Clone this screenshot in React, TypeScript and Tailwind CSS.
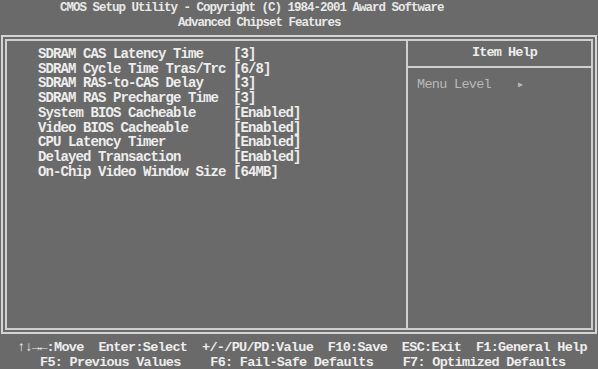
const items = [
    { label: "SDRAM CAS Latency Time", value: "[3]" },
    { label: "SDRAM Cycle Time Tras/Trc", value: "[6/8]" },
    { label: "SDRAM RAS-to-CAS Delay", value: "[3]" },
    { label: "SDRAM RAS Precharge Time", value: "[3]" },
    { label: "System BIOS Cacheable", value: "[Enabled]" },
    { label: "Video BIOS Cacheable", value: "[Enabled]" },
    { label: "CPU Latency Timer", value: "[Enabled]" },
    { label: "Delayed Transaction", value: "[Enabled]" },
    { label: "On-Chip Video Window Size", value: "[64MB]" },
];

export default function App() {
    return (
        <div className="w-[598px] h-[369px] overflow-hidden bg-[#6a6a6a] text-[#ededed] font-bold font-['Liberation_Mono','DejaVu_Sans_Mono',monospace]">
            {/* Title */}
            <div className="pt-[1px] text-[12.5px] leading-[15px] tracking-[-1px] text-[#e8e8e8] whitespace-pre">
                <div className="pl-[60px]">CMOS Setup Utility - Copyright (C) 1984-2001 Award Software</div>
                <div className="pl-[178px]">Advanced Chipset Features</div>
            </div>

            {/* Main frame */}
            <div className="mt-[4px] ml-[1px] w-[596px] h-[299px] border-2 border-[#d4d4d4] p-[2px]">
                <div className="h-full border-2 border-[#cfcfcf] flex">
                    <div className="w-[399px] pt-[6px] pl-[31px] text-[14px] leading-[14.7px] tracking-[-0.9px] whitespace-pre">
                        {items.map((item) => (
                            <div key={item.label} className="flex">
                                <span className="w-[195px] shrink-0">{item.label}</span>
                                <span>{item.value}</span>
                            </div>
                        ))}
                    </div>
                    <div className="flex-1 border-l-2 border-[#cfcfcf] flex flex-col">
                        <div className="h-[27px] border-b-2 border-[#cfcfcf] flex items-center justify-center pl-[10px] text-[13.5px] tracking-[-0.9px]">
                            Item Help
                        </div>
                        <div className="pt-[10px] pl-[9px] text-[13.5px] leading-[14px] tracking-[-0.7px] text-[#b9b9b9] font-normal whitespace-pre flex items-center">
                            <span>Menu Level</span>
                            <span className="ml-[27px] text-[8px]">▶</span>
                        </div>
                    </div>
                </div>
            </div>

            {/* Footer */}
            <div className="mt-[7px] text-[13.5px] leading-[14.7px] tracking-[-0.7px] whitespace-pre">
                <div className="pl-[17px]">↑↓→←:Move  Enter:Select  +/-/PU/PD:Value  F10:Save  ESC:Exit  F1:General Help</div>
                <div className="pl-[40px]">F5: Previous Values    F6: Fail-Safe Defaults    F7: Optimized Defaults</div>
            </div>
        </div>
    );
}
